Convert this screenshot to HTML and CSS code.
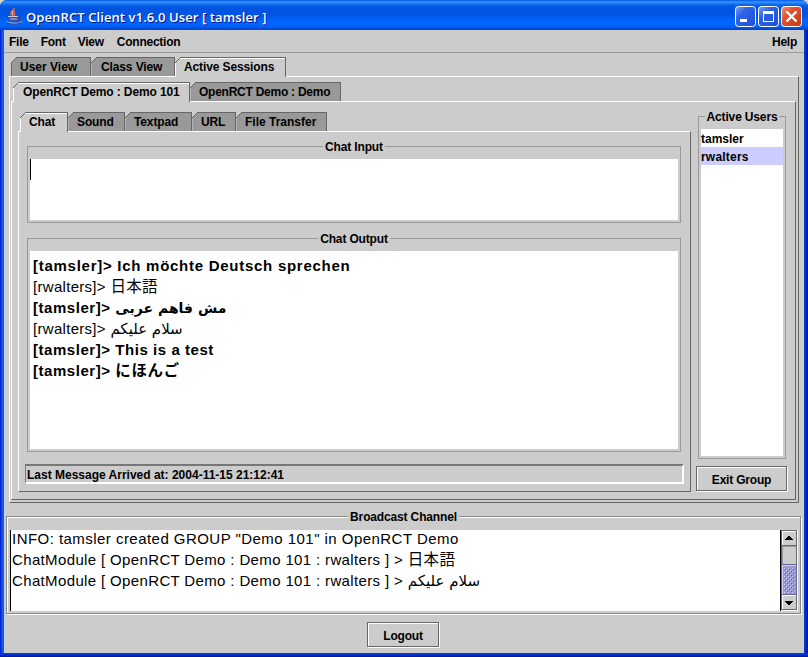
FILE: index.html
```
<!DOCTYPE html>
<html lang="en">
<head>
<meta charset="utf-8">
<title>OpenRCT Client</title>
<link rel="stylesheet" href="styles.css">
</head>
<body>
<div class="window">
  <header class="titlebar">
    <svg class="app-icon" width="16" height="17" viewBox="0 0 16 17" fill="none">
      <path d="M7 0c1 2-4 3-3 6 0 1 1 1 2 2M8 3c-3 2 1 3-1 5" stroke="#e8643c" stroke-width="1.600"/>
      <path d="M6 3c-1 2-1 2 0 4" stroke="#ffc9a8"/>
      <path d="M1 8h10.500l-1 5.500H3z" fill="#3b4a94"/>
      <path d="M1 8.500h10.500M3 11h7" stroke="#c3cbe6" stroke-width="1.100"/>
      <path d="M11 9c4-1 4 3 0 3.500" stroke="#39478f" stroke-width="1.500"/>
      <path d="M0 13.500c1 2.500 13 2.500 14.500 0" stroke="#c3cbe6" stroke-width="1.300"/>
      <path d="M0 14.500c3 2.300 11 2.300 14 0" stroke="#39478f" stroke-width="1.200"/>
    </svg>
    <h1 class="title">OpenRCT Client v1.6.0 User [ tamsler ]</h1>
    <div class="controls">
      <svg width="21" height="21" viewBox="0 0 21 21">
        <defs>
          <linearGradient id="blue" x2="1" y2="1"><stop stop-color="#7da2f5"/><stop offset=".35" stop-color="#2f62e4"/><stop offset="1" stop-color="#1c4fd6"/></linearGradient>
          <linearGradient id="red" x2="1" y2="1"><stop stop-color="#f09a80"/><stop offset=".35" stop-color="#e0532f"/><stop offset="1" stop-color="#c8360f"/></linearGradient>
        </defs>
        <rect x=".5" y=".5" width="20" height="20" rx="3" fill="url(#blue)" stroke="#fff"/><path d="M5 13h7v3H5z" fill="#fff"/></svg>
      <svg width="21" height="21" viewBox="0 0 21 21"><rect x=".5" y=".5" width="20" height="20" rx="3" fill="url(#blue)" stroke="#fff"/><path d="M5 5h11v11H5zM6 8v7h9V8z" fill="#fff" fill-rule="evenodd"/></svg>
      <svg width="21" height="21" viewBox="0 0 21 21"><rect x=".5" y=".5" width="20" height="20" rx="3" fill="url(#red)" stroke="#fff"/><path d="M5.500 5.500l10 10M15.500 5.500l-10 10" stroke="#fff" stroke-width="2.300"/></svg>
    </div>
  </header>
  <nav class="menubar">
    <span>File</span><span>Font</span><span>View</span><span class="connection">Connection</span><span class="help">Help</span>
  </nav>
  <main class="content">
    <div class="tabs tabs-main">
      <div class="tab w-user"><span>User View</span></div>
      <div class="tab w-class"><span>Class View</span></div>
      <div class="tab active w-active"><span>Active Sessions</span></div>
    </div>
    <section class="pane pane-main">
      <div class="tabs tabs-session">
        <div class="tab active w-demo101"><span>OpenRCT Demo : Demo 101</span></div>
        <div class="tab w-demo"><span>OpenRCT Demo : Demo</span></div>
      </div>
      <section class="pane pane-session">
        <div class="modules">
          <div class="tabs tabs-module">
            <div class="tab active w-chat"><span>Chat</span></div>
            <div class="tab w-sound"><span>Sound</span></div>
            <div class="tab w-textpad"><span>Textpad</span></div>
            <div class="tab w-url"><span>URL</span></div>
            <div class="tab w-file"><span>File Transfer</span></div>
          </div>
          <section class="pane pane-module">
            <div class="group input-group">
              <h2>Chat Input</h2>
              <div class="field"><div class="caret"></div></div>
            </div>
            <div class="group output-group">
              <h2>Chat Output</h2>
              <div class="field log">
                <p class="own german">[tamsler]&gt; Ich möchte Deutsch sprechen</p>
                <p>[rwalters]&gt; <span class="cjk">日本語</span></p>
                <p class="own">[tamsler]&gt; <bdi class="arabic">مش فاهم عربى</bdi></p>
                <p>[rwalters]&gt; <bdi class="arabic">سلام عليكم</bdi></p>
                <p class="own">[tamsler]&gt; This is a test</p>
                <p class="own">[tamsler]&gt; <span class="cjk">にほんご</span></p>
              </div>
            </div>
            <div class="status"><span>Last Message Arrived at: 2004-11-15 21:12:41</span></div>
          </section>
        </div>
        <aside class="side">
          <div class="group users">
            <h2>Active Users</h2>
            <ul class="field">
              <li>tamsler</li>
              <li class="selected">rwalters</li>
            </ul>
          </div>
          <button class="exit">Exit Group</button>
        </aside>
      </section>
    </section>
    <section class="group broadcast">
      <h2>Broadcast Channel</h2>
      <div class="scrollpane">
        <div class="messages">
          <p>INFO: tamsler created GROUP "Demo 101" in OpenRCT Demo</p>
          <p>ChatModule [ OpenRCT Demo : Demo 101 : rwalters ] &gt; <span class="cjk">日本語</span></p>
          <p>ChatModule [ OpenRCT Demo : Demo 101 : rwalters ] &gt; <bdi class="arabic">سلام عليكم</bdi></p>
        </div>
        <svg class="scrollbar" width="18" height="81" viewBox="0 0 18 81" shape-rendering="crispEdges">
          <defs>
            <pattern id="bumps" x="4" y="38" width="4" height="4" patternUnits="userSpaceOnUse">
              <path d="M0 0h1v1H0zM2 2h1v1H2z" fill="#ccf"/>
              <path d="M1 1h1v1H1zM3 3h1v1H3z" fill="#669"/>
            </pattern>
          </defs>
          <path d="M0 0h18v81H0z" fill="#ccc"/>
          <path d="M0 0h1v81H0z" fill="#000"/>
          <path d="M1 0h16v80H1zM2 1v78h14V1z" fill="#666" fill-rule="evenodd"/>
          <path d="M17 0h1v81H1v-1h16z" fill="#fff"/>
          <path d="M2 1h14v1H3v13H2zM2 65h14v1H3v13H2z" fill="#fff"/>
          <path d="M2 15h14v1H2z" fill="#666"/>
          <path d="M2 16h14v1H3v17H2z" fill="#999"/>
          <path d="M1 34h16v31H1z" fill="#669"/>
          <path d="M2 35h14v29H2z" fill="#99c"/>
          <path d="M2 35h14v1H3v28H2z" fill="#ccf"/>
          <path d="M4 38h11v25H4z" fill="url(#bumps)"/>
          <path d="M8 6h2v1h1v1h1v1h1v1H5V9h1V8h1V7h1zM5 71h8v1h-1v1h-1v1h-1v1H8v-1H7v-1H6v-1H5z" fill="#000"/>
        </svg>
      </div>
    </section>
    <footer><button class="logout">Logout</button></footer>
  </main>
  <div class="frame-bottom"></div>
</div>
</body>
</html>
```

FILE: styles.css
```
* { box-sizing: border-box; }
body {
  margin: 0;
  background: #d8d4c8;
  font: bold 12px/14px "Liberation Sans", Arial, sans-serif;
  color: #000;
}
h1, h2, p, ul { margin: 0; padding: 0; font: inherit; }
.window {
  width: 808px;
  height: 657px;
  overflow: hidden;
  border-radius: 7px 7px 0 0;
  background: linear-gradient(90deg, #0019cf 0, #0831d9 1px, #166aee 3px, #0855dd 4px, #0855dd 804px, #0441d8 804px, #0029c0 806px, #00138c 808px);
}
.frame-bottom { height: 4px; background: linear-gradient(#0441e8, #0031d0 50%, #00138c); }
.titlebar {
  display: flex;
  align-items: center;
  height: 30px;
  padding: 3px 6px 0 7px;
  background: linear-gradient(#0058e6 0, #3a93ff 2px, #2583f7 3px, #0663e9 5px, #0054e0 8px, #0055e5 15px, #0065fb 21px, #0066ff 25px, #005bea 27px, #0042c9 30px);
}
.title {
  margin: 1px 0 0 3px;
  font: 600 13px/18px "Open Sans", sans-serif;
  letter-spacing: .1px;
  color: #fff;
  text-shadow: 1px 1px 0 #0f1089;
  white-space: nowrap;
}
.controls { display: flex; gap: 2px; margin-left: auto; }
.menubar {
  display: flex;
  gap: 12px;
  height: 23px;
  margin: 0 4px;
  padding: 5px 7px 0 5px;
  background: #ccc;
  border-bottom: 1px solid #999;
  letter-spacing: -.25px;
}
.connection { margin-left: 1px; }
.help { margin-left: auto; }
.content {
  display: flex;
  flex-direction: column;
  height: 600px;
  margin: 0 4px;
  padding: 4px 2px 0;
  background: #ccc;
}
.tabs { display: flex; height: 19px; letter-spacing: -.12px; }
.tabs-main { margin-left: 5px; }
.tab {
  position: relative;
  height: 19px;
  padding: 2px 0 0 9px;
  background: #999;
  border-top: 1px solid #666;
  border-right: 1px solid #666;
  border-left: 1px solid #666;
  white-space: nowrap;
}
.tab + .tab { border-left-color: #b5b5b5; }
.tab::before {
  content: "";
  position: absolute;
  left: -1px;
  top: -1px;
  width: 6px;
  height: 6px;
  background: linear-gradient(135deg, #ccc 44%, #666 44% 56%, transparent 56%);
}
.tab.active {
  height: 20px;
  background: #ccc;
  border-left-color: #fff;
  box-shadow: inset 0 1px #fff;
}
.w-user { width: 80px; padding-left: 8px; letter-spacing: 0; }
.w-class { width: 84px; }
.w-active { width: 111px; padding-left: 8px; }
.w-demo101 { width: 177px; }
.w-demo { width: 151px; padding-left: 8px; letter-spacing: -.25px; }
.w-chat { width: 48px; padding-left: 8px; }
.w-sound { width: 57px; padding-left: 8px; }
.w-textpad { width: 67px; padding-left: 8px; }
.w-url { width: 44px; padding-left: 8px; }
.w-file { width: 91px; padding-left: 8px; letter-spacing: 0; }
.pane {
  border: 1px solid;
  border-color: #fff #666 #666 #fff;
}
.pane-main { width: 790px; height: 427px; margin-left: 3px; padding: 5px 2px 2px 1px; }
.tabs-session { margin-left: 2px; }
.pane-session { display: flex; width: 785px; height: 399px; padding: 10px 8px 7px 6px; }
.modules { width: 673px; margin-right: 5px; }
.tabs-module { margin-left: 2px; }
.pane-module { height: 361px; padding: 14px 6px 7px; }
.group { border: 1px solid #999; }
.group h2 {
  width: max-content;
  height: 14px;
  margin: -8px auto 0;
  padding: 0 2px;
  background: #ccc;
  line-height: 16px;
  letter-spacing: -.15px;
}
.group .field { margin: 6px 2px 0; background: #fff; }
.input-group { width: 654px; height: 77px; margin-left: 2px; }
.input-group .field { height: 61px; width: 648px; }
.caret { width: 1px; height: 21px; background: #000; }
.output-group { width: 654px; height: 214px; margin: 15px 0 0 2px; }
.log {
  width: 648px;
  height: 198px;
  padding: 4px 3px;
  font: 15px/21px "Liberation Sans", "Noto Sans CJK JP", sans-serif;
  letter-spacing: .3px;
}
.log p, .messages p { height: 21px; white-space: pre; }
.log .own { font-weight: bold; letter-spacing: .55px; }
.log .german { letter-spacing: .73px; }
.arabic { font-family: "DejaVu Sans", sans-serif; font-size: 15px; letter-spacing: 0; }
.own .arabic { font-size: 14px; }
.cjk { font-size: 15.5px; }
.status {
  width: 659px;
  height: 20px;
  margin-top: 12px;
  padding: 2px 0 0 1px;
  border: solid;
  border-width: 2px 2px 2px 1px;
  border-color: #777 #fff #fff #777;
}
.side { width: 92px; margin-top: 4px; }
.users { width: 88px; height: 343px; margin-left: 2px; }
.users .field { width: 82px; height: 327px; margin-top: 6px; list-style: none; }
.users li { height: 18px; padding-top: 3px; }
.users .selected { background: #ccf; letter-spacing: .2px; }
button {
  display: block;
  padding: 2px 0 0;
  background: #ccc;
  border: 1px solid #666;
  border-radius: 0;
  box-shadow: inset 1px 1px #fff, 1px 1px #fff;
  font: inherit;
  letter-spacing: -.2px;
  color: #000;
}
.exit { width: 91px; height: 25px; margin: 7px 0 0 0; }
.broadcast {
  width: 795px;
  height: 98px;
  margin-top: 13px;
  border-color: #888;
  box-shadow: inset 1px 1px #fff, 1px 1px #fff;
}
.scrollpane { display: flex; width: 788px; height: 81px; margin: 7px 0 0 3px; }
.messages {
  width: 770px;
  border-left: 1px solid #000;
  background: #fff;
  padding-left: 1px;
  font: 15px/21px "Liberation Sans", "Noto Sans CJK JP", sans-serif;
  letter-spacing: .36px;
}
.messages p:first-child { height: 19px; margin-top: -2px; margin-bottom: 2px; letter-spacing: .46px; }
footer { display: flex; justify-content: center; margin: 8px 2px 0 0; }
.logout { width: 72px; height: 25px; }
```
